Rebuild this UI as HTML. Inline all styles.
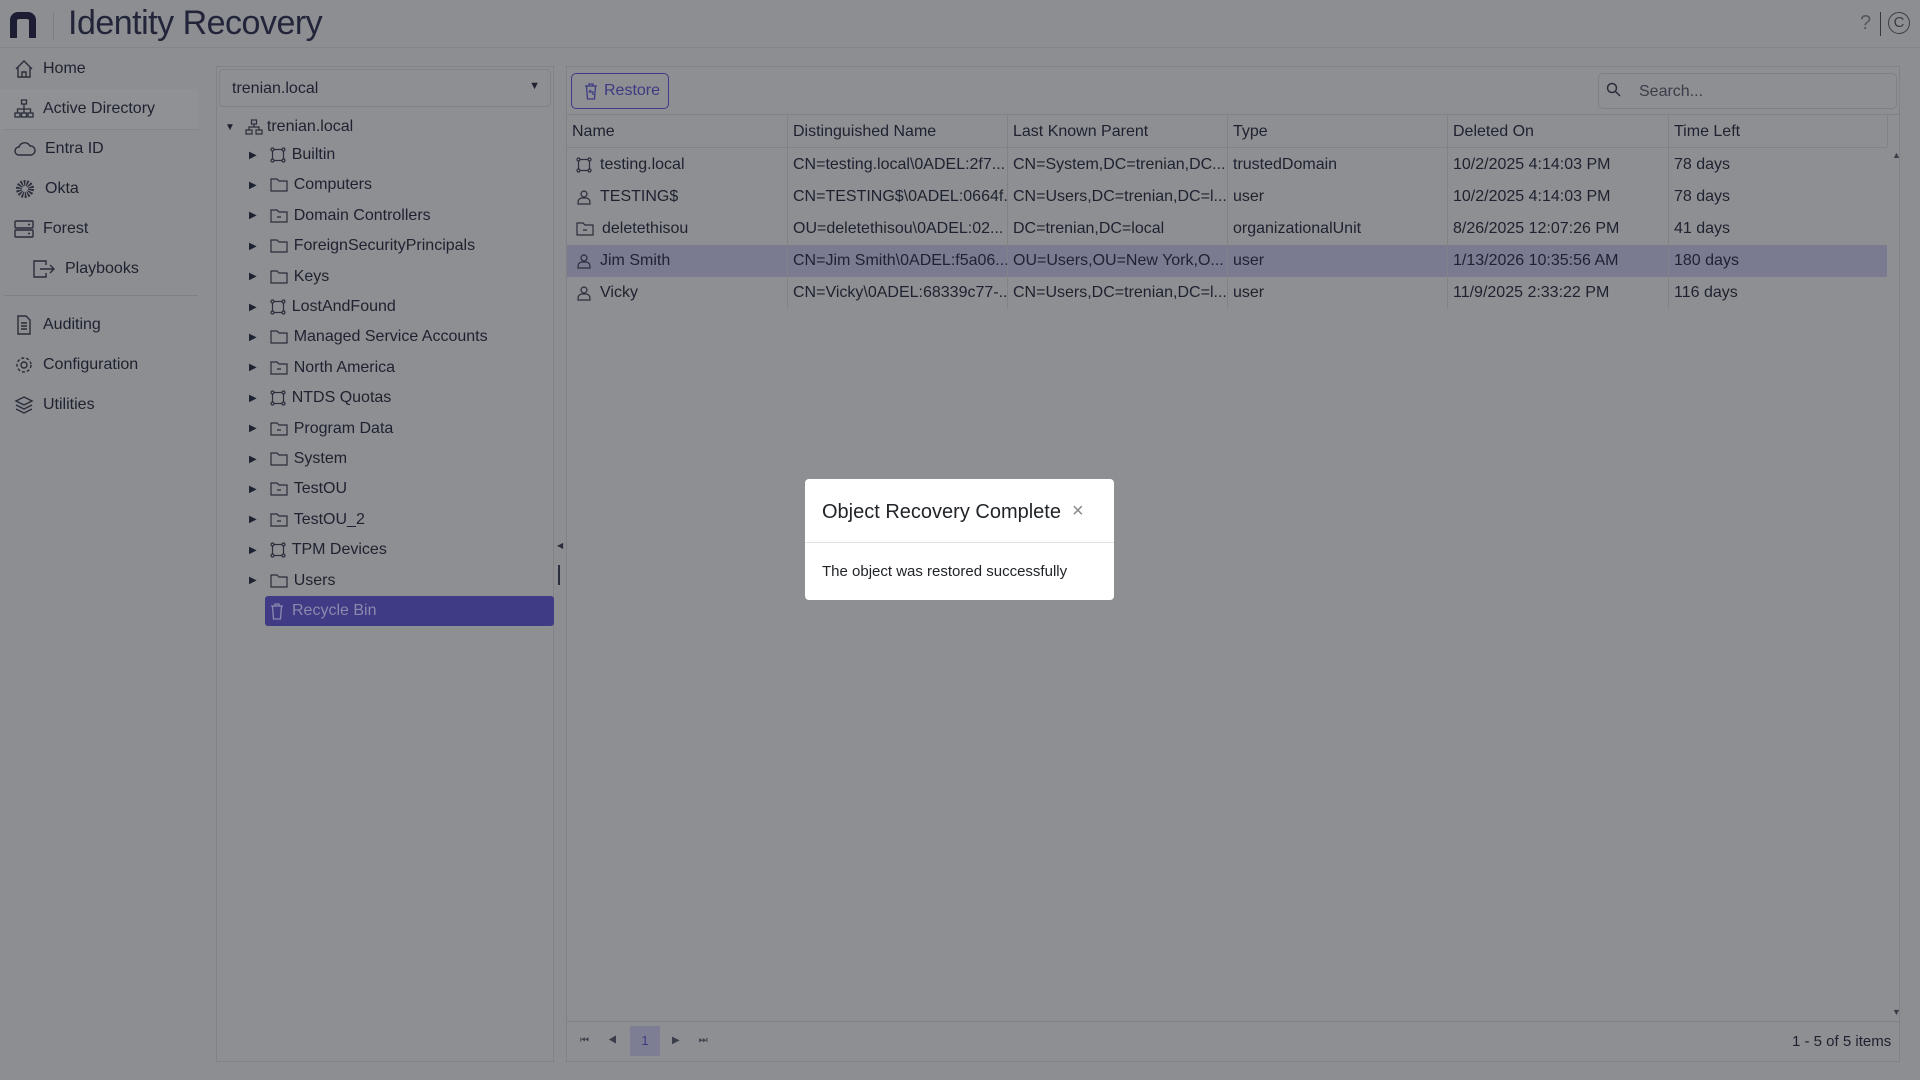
<!DOCTYPE html>
<html><head><meta charset="utf-8"><style>
*{box-sizing:border-box;margin:0;padding:0}
body{width:1920px;height:1080px;background:#8d8e91;font-family:"Liberation Sans",sans-serif;color:#1e2230;position:relative;overflow:hidden;font-size:16px}
.abs{position:absolute}
.hdr{left:0;top:0;width:1920px;height:48px;border-bottom:1px solid #85868a}
.title{left:68px;top:4px;font-size:34px;color:#22253a;letter-spacing:-0.5px}
.side{left:0;top:49px;width:200px;height:1031px;background:#8d8e91}
.si{position:absolute;left:0;width:198px;height:40px;display:flex;align-items:center;font-size:16px;color:#1e2230}
.si svg{margin-left:14px;margin-right:9px}
.tree{left:216px;top:66px;width:338px;height:996px;background:#8e8f92;border:1px solid #818286}
.dd{position:absolute;left:2px;top:2px;width:332px;height:38px;border:1px solid #818286;border-radius:4px;font-size:16px;padding:10px 12px}
.ti{position:absolute;height:30px;display:flex;align-items:center;font-size:16px}
.grid{left:566px;top:66px;width:1334px;height:996px;background:#8e8f92;border:1px solid #818286}
.btn{left:571px;top:73px;width:98px;height:36px;border:1px solid #3e3a85;border-radius:5px;color:#3d3a82;font-size:16px;display:flex;align-items:center;padding-left:12px;gap:6px}
.srch{left:1598px;top:73px;width:299px;height:36px;border:1px solid #7f8084;border-radius:5px;font-size:16px;color:#3a3d4a;padding:9px 0 0 40px}
.cell{position:absolute;height:32px;line-height:32px;font-size:16px;padding-left:5px;white-space:nowrap;overflow:hidden}
.vl{position:absolute;width:1px;background:#818286}
.modal{left:805px;top:479px;width:309px;height:121px;background:#fff;border-radius:4px}
</style></head><body>
<div class="abs hdr"></div>
<svg class="abs" style="left:8px;top:10px" width="30" height="30" viewBox="0 0 30 30"><path d="M2 28V10a8 8 0 0 1 8-8h10a8 8 0 0 1 8 8v18h-7V11a2 2 0 0 0-2-2h-8a2 2 0 0 0-2 2v17z" fill="#1c1d33"/></svg>
<div class="abs" style="left:53px;top:12px;width:1px;height:28px;background:#7d7e82"></div>
<div class="abs title">Identity Recovery</div>
<div class="abs" style="left:1860px;top:12px;font-size:20px;color:#55575f">?</div>
<div class="abs" style="left:1880px;top:12px;width:1px;height:24px;background:#33353f"></div>
<div class="abs" style="left:1888px;top:12px;width:22px;height:22px;border:1.5px solid #3b3d47;border-radius:50%;font-size:15px;text-align:center;line-height:20px;color:#3b3d47">C</div>

<div class="abs side">
<div class="si" style="top:0"><svg width="20" height="20" viewBox="0 0 20 20" fill="none" stroke="#2a2d3b" stroke-width="1.4"><path d="M2 10L10 2l8 8M4 8v10h12V8M8 18v-5h4v5"/></svg>Home</div>
<div class="abs" style="left:4px;top:40px;width:194px;height:1px;background:#84858a"></div>
<div class="si" style="top:40px;background:#909194"><svg width="20" height="20" viewBox="0 0 20 20" fill="none" stroke="#2a2d3b" stroke-width="1.3"><rect x="7.5" y="1" width="5" height="4"/><rect x="1" y="14" width="5" height="4"/><rect x="7.5" y="14" width="5" height="4"/><rect x="14" y="14" width="5" height="4"/><path d="M10 5v9M3.5 14V10h13v4"/></svg>Active Directory</div>
<div class="abs" style="left:4px;top:80px;width:194px;height:1px;background:#84858a"></div>
<div class="si" style="top:80px"><svg width="22" height="20" viewBox="0 0 22 20" fill="none" stroke="#2a2d3b" stroke-width="1.4"><path d="M5 16a4 4 0 0 1 0-8 6 6 0 0 1 11-1 4.5 4.5 0 0 1 1 9z"/></svg>Entra ID</div>
<div class="si" style="top:120px"><svg width="22" height="22" viewBox="0 0 22 22" fill="none" stroke="#2a2d3b" stroke-width="1.6"><circle cx="11" cy="11" r="6" stroke-dasharray="1.5 1.2" stroke-width="6"/></svg>Okta</div>
<div class="si" style="top:160px"><svg width="20" height="20" viewBox="0 0 20 20" fill="none" stroke="#2a2d3b" stroke-width="1.4"><rect x="1" y="2" width="18" height="7" rx="1"/><rect x="1" y="11" width="18" height="7" rx="1"/><path d="M14 5.5h2M14 14.5h2"/></svg>Forest</div>
<div class="si" style="top:200px"><svg style="margin-left:32px" width="24" height="20" viewBox="0 0 24 20" fill="none" stroke="#2a2d3b" stroke-width="1.4"><path d="M14 6V2H2v16h12v-4M8 10h14M18 6l4 4-4 4"/></svg>Playbooks</div>
<div class="abs" style="left:4px;top:246px;width:194px;height:1px;background:#7f8084"></div>
<div class="si" style="top:256px"><svg width="20" height="20" viewBox="0 0 20 20" fill="none" stroke="#2a2d3b" stroke-width="1.4"><path d="M4 1h8l4 4v14H4zM7 8h6M7 11h6M7 14h6"/></svg>Auditing</div>
<div class="si" style="top:296px"><svg width="20" height="20" viewBox="0 0 20 20" fill="none" stroke="#2a2d3b" stroke-width="1.4"><circle cx="10" cy="10" r="3"/><circle cx="10" cy="10" r="7" stroke-dasharray="3 2"/></svg>Configuration</div>
<div class="si" style="top:336px"><svg width="20" height="20" viewBox="0 0 20 20" fill="none" stroke="#2a2d3b" stroke-width="1.4"><path d="M10 2l8 4-8 4-8-4zM2 10l8 4 8-4M2 14l8 4 8-4"/></svg>Utilities</div>
</div>

<div class="abs tree">
<div class="dd">trenian.local<span style="position:absolute;right:10px;top:10px;font-size:11px">▼</span></div>
<div class="ti" style="left:8px;top:45px"><span style="font-size:10px;margin-right:10px">▼</span><svg width="18" height="16" viewBox="0 0 18 16" fill="none" stroke="#2a2d3b" stroke-width="1.2"><rect x="6.5" y="1" width="5" height="4"/><rect x="1" y="11" width="6" height="4"/><rect x="11" y="11" width="6" height="4"/><path d="M9 5v3M4 11V8h10v3"/></svg><span style="margin-left:4px">trenian.local</span></div>
</div>
<div id="tr"></div>
<div class="abs" style="left:265px;top:596px;width:289px;height:30px;background:#3f3b85;border-radius:3px"></div>
<div class="abs ti" style="left:270px;top:596px;color:#8b89ad"><svg width="14" height="18" viewBox="0 0 14 18" fill="none" stroke="#8b89ad" stroke-width="1.3"><path d="M1 4h12M5 4V2h4v2M2.5 4l1 13h7l1-13"/></svg><span style="margin-left:8px">Recycle Bin</span></div>
<div class="abs" style="left:557px;top:541px;font-size:8px;color:#2a2d3b">◀</div>
<div class="abs" style="left:558px;top:565px;width:2px;height:20px;background:#2a2d3b"></div>

<div class="abs grid"></div>
<div class="abs btn"><svg width="14" height="18" viewBox="0 0 14 18" fill="none" stroke="#3d3a82" stroke-width="1.3"><path d="M1 4h12M5 4V2h4v2M2.5 4l1 13h7l1-13M5 10l2-2M5 10h4v3"/></svg>Restore</div>
<div class="abs srch">Search...</div>
<svg class="abs" style="left:1606px;top:82px" width="16" height="16" viewBox="0 0 16 16" fill="none" stroke="#2a2d3b" stroke-width="1.5"><circle cx="6" cy="6" r="4.5"/><path d="M9.5 9.5L14 14"/></svg>
<div class="abs" style="left:567px;top:114px;width:1332px;height:1px;background:#818286"></div>
<div class="abs" style="left:567px;top:147px;width:1320px;height:1px;background:#818286"></div>
<div class="abs" style="left:567px;top:245px;width:1320px;height:32px;background:#7a7b91"></div>
<div id="g"></div>
<div class="abs" style="left:1892px;top:150px;font-size:9px;color:#3a3d4a">▲</div>
<div class="abs" style="left:1892px;top:1007px;font-size:9px;color:#3a3d4a">▼</div>
<div class="abs" style="left:567px;top:1021px;width:1332px;height:1px;background:#818286"></div>
<div class="abs" style="left:630px;top:1026px;width:30px;height:30px;background:#7d7e94;color:#3d3a82;font-size:13px;text-align:center;line-height:30px">1</div>
<div class="abs" style="left:580px;top:1035px;font-size:10px;color:#3a3d4a;letter-spacing:19px">⏮◀</div>
<div class="abs" style="left:672px;top:1035px;font-size:10px;color:#3a3d4a;letter-spacing:19px">▶⏭</div>
<div class="abs" style="left:1792px;top:1033px;font-size:15px">1 - 5 of 5 items</div>

<div class="abs modal">
<div class="abs" style="left:17px;top:22px;font-size:20px;color:#212529">Object Recovery Complete</div>
<div class="abs" style="left:267px;top:21px;font-size:20px;color:#888">×</div>
<div class="abs" style="left:0;top:63px;width:309px;height:1px;background:#e2e2e2"></div>
<div class="abs" style="left:17px;top:84px;font-size:15px;color:#212529">The object was restored successfully</div>
</div>

<script>
var items=[["Builtin","c"],["Computers","f"],["Domain Controllers","o"],["ForeignSecurityPrincipals","f"],["Keys","f"],["LostAndFound","c"],["Managed Service Accounts","f"],["North America","o"],["NTDS Quotas","c"],["Program Data","o"],["System","f"],["TestOU","o"],["TestOU_2","o"],["TPM Devices","c"],["Users","f"]];
var ic={c:'<svg width="16" height="16" viewBox="0 0 16 16" fill="none" stroke="#2a2d3b" stroke-width="1.2"><rect x="2.5" y="2.5" width="11" height="11"/><circle cx="2.5" cy="2.5" r="1.5" fill="#8e8f92"/><circle cx="13.5" cy="2.5" r="1.5" fill="#8e8f92"/><circle cx="2.5" cy="13.5" r="1.5" fill="#8e8f92"/><circle cx="13.5" cy="13.5" r="1.5" fill="#8e8f92"/></svg>',
f:'<svg width="18" height="16" viewBox="0 0 18 16" fill="none" stroke="#2a2d3b" stroke-width="1.2"><path d="M1 2h6l2 2h8v10H1z"/></svg>',
o:'<svg width="18" height="16" viewBox="0 0 18 16" fill="none" stroke="#2a2d3b" stroke-width="1.2"><path d="M1 2h6l2 2h8v10H1zM7 9h4"/></svg>'};
var h='';items.forEach(function(it,i){var y=140+i*30.4;h+='<div class="abs ti" style="left:249px;top:'+y+'px"><span style="font-size:10px;margin-right:13px">▶</span>'+ic[it[1]]+'<span style="margin-left:6px">'+it[0]+'</span></div>';});
document.getElementById('tr').innerHTML=h;
var xs=[566,787,1007,1227,1447,1668];
var hd=["Name","Distinguished Name","Last Known Parent","Type","Deleted On","Time Left"];
var user='<svg width="16" height="16" viewBox="0 0 16 16" fill="none" stroke="#2a2d3b" stroke-width="1.2"><circle cx="8" cy="5" r="3"/><path d="M2 15v-2a4 4 0 0 1 4-4h4a4 4 0 0 1 4 4v2z"/></svg>';
var rows=[[ic.c,"testing.local","CN=testing.local\\0ADEL:2f7...","CN=System,DC=trenian,DC...","trustedDomain","10/2/2025 4:14:03 PM","78 days"],
[user,"TESTING$","CN=TESTING$\\0ADEL:0664f...","CN=Users,DC=trenian,DC=l...","user","10/2/2025 4:14:03 PM","78 days"],
[ic.o,"deletethisou","OU=deletethisou\\0ADEL:02...","DC=trenian,DC=local","organizationalUnit","8/26/2025 12:07:26 PM","41 days"],
[user,"Jim Smith","CN=Jim Smith\\0ADEL:f5a06...","OU=Users,OU=New York,O...","user","1/13/2026 10:35:56 AM","180 days"],
[user,"Vicky","CN=Vicky\\0ADEL:68339c77-...","CN=Users,DC=trenian,DC=l...","user","11/9/2025 2:33:22 PM","116 days"]];
h='';hd.forEach(function(t,i){h+='<div class="cell" style="left:'+(xs[i]+1)+'px;top:116px">'+t+'</div>';if(i>0)h+='<div class="vl" style="left:'+xs[i]+'px;top:114px;height:195px"></div>';});
h+='<div class="vl" style="left:1887px;top:114px;height:33px"></div>';
rows.forEach(function(r,j){var y=149+j*32;h+='<div class="cell" style="left:571px;top:'+y+'px;display:flex;align-items:center;gap:8px">'+r[0]+'<span>'+r[1]+'</span></div>';for(var i=1;i<6;i++)h+='<div class="cell" style="left:'+(xs[i]+1)+'px;top:'+y+'px;width:'+(i<5?219:215)+'px">'+r[i+1]+'</div>';});
document.getElementById('g').innerHTML=h;
</script>
</body></html>
